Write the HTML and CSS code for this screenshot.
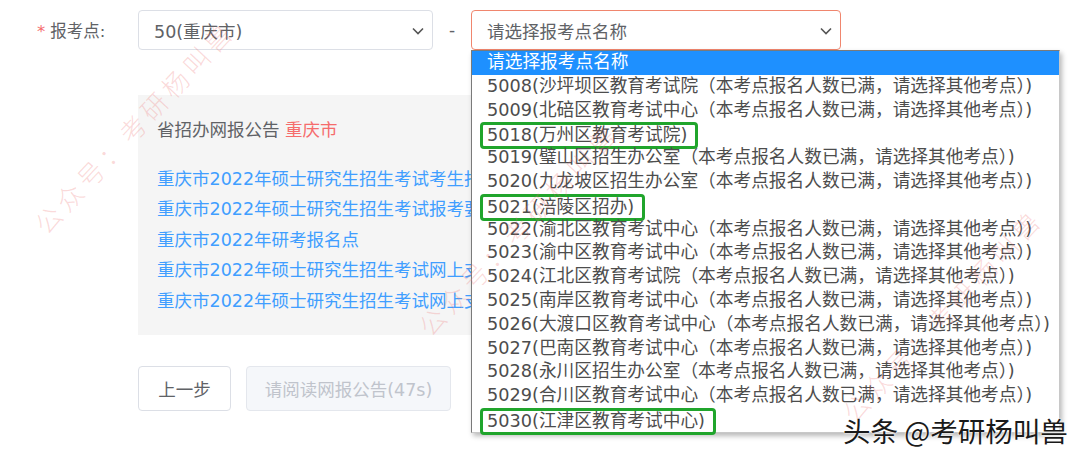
FILE: index.html
```html
<!DOCTYPE html>
<html lang="zh-CN">
<head>
    <meta charset="UTF-8">
    <meta name="viewport" content="width=device-width, initial-scale=1.0">
    <title>报考点选择</title>
    <link rel="stylesheet" href="styles.css">
</head>
<body>
    <div class="page">
        <div class="form-row">
            <label class="form-label"><span class="req">*</span>报考点:</label>
            <div class="select select-province">
                <span>50(重庆市)</span>
                <svg class="chevron" width="12" height="8" viewBox="0 0 12 8"><polyline points="1,1.5 6,6.5 11,1.5" fill="none" stroke="#555" stroke-width="1.6"/></svg>
            </div>
            <span class="dash">-</span>
            <div class="select select-site">
                <span>请选择报考点名称</span>
                <svg class="chevron" width="12" height="8" viewBox="0 0 12 8"><polyline points="1,1.5 6,6.5 11,1.5" fill="none" stroke="#555" stroke-width="1.6"/></svg>

                <!-- opened native dropdown -->
                <ul class="option-list">
                    <li class="selected">请选择报考点名称</li>
                    <li>5008(沙坪坝区教育考试院（本考点报名人数已满，请选择其他考点）)</li>
                    <li>5009(北碚区教育考试中心（本考点报名人数已满，请选择其他考点）)</li>
                    <li><span class="mark">5018(万州区教育考试院)</span></li>
                    <li>5019(璧山区招生办公室（本考点报名人数已满，请选择其他考点）)</li>
                    <li>5020(九龙坡区招生办公室（本考点报名人数已满，请选择其他考点）)</li>
                    <li><span class="mark">5021(涪陵区招办)</span></li>
                    <li>5022(渝北区教育考试中心（本考点报名人数已满，请选择其他考点）)</li>
                    <li>5023(渝中区教育考试中心（本考点报名人数已满，请选择其他考点）)</li>
                    <li>5024(江北区教育考试院（本考点报名人数已满，请选择其他考点）)</li>
                    <li>5025(南岸区教育考试中心（本考点报名人数已满，请选择其他考点）)</li>
                    <li>5026(大渡口区教育考试中心（本考点报名人数已满，请选择其他考点）)</li>
                    <li>5027(巴南区教育考试中心（本考点报名人数已满，请选择其他考点）)</li>
                    <li>5028(永川区招生办公室（本考点报名人数已满，请选择其他考点）)</li>
                    <li>5029(合川区教育考试中心（本考点报名人数已满，请选择其他考点）)</li>
                    <li><span class="mark">5030(江津区教育考试中心)</span></li>
                </ul>
            </div>
        </div>

        <div class="notice">
            <p class="notice-title">省招办网报公告 <span class="city">重庆市</span></p>
            <a href="#">重庆市2022年硕士研究生招生考试考生报名须知</a>
            <a href="#">重庆市2022年硕士研究生招生考试报考要求</a>
            <a href="#">重庆市2022年研考报名点</a>
            <a href="#">重庆市2022年硕士研究生招生考试网上支付说明</a>
            <a href="#">重庆市2022年硕士研究生招生考试网上支付须知</a>
        </div>

        <div class="actions">
            <button class="btn">上一步</button>
            <button class="btn btn-disabled" disabled>请阅读网报公告(47s)</button>
        </div>
    </div>

    <div class="watermark wm-1">公众号：考研杨叫兽</div>
    <div class="watermark wm-2">公众号：考研杨叫兽</div>
    <div class="watermark wm-3">公众号：考研杨叫兽</div>

    <div class="brand">头条 @考研杨叫兽</div>
</body>
</html>
```

FILE: styles.css
```css
body {
    margin: 0;
    width: 1080px;
    height: 458px;
    overflow: hidden;
    position: relative;
    background-color: #fff;
    font-family: "DejaVu Sans", "Noto Sans CJK SC", sans-serif;
    color: #606266;
}

.page {
    padding-top: 10px;
}

.form-row {
    display: flex;
    align-items: center;
    height: 40px;
}

.form-label {
    width: 138px;
    flex-shrink: 0;
    box-sizing: border-box;
    padding-left: 37px;
    font-size: 16.5px;
    color: #606266;
    white-space: nowrap;
}

.req {
    color: #f56c6c;
    margin-right: 5px;
}

.select {
    position: relative;
    flex-shrink: 0;
    height: 40px;
    box-sizing: border-box;
    border: 1px solid #dcdfe6;
    border-radius: 4px;
    display: flex;
    align-items: center;
    justify-content: space-between;
    padding: 0 8px 0 15px;
    font-size: 17.5px;
    color: #606266;
    background-color: #fff;
}

.select-province {
    width: 295px;
}

.select-site {
    width: 370px;
    border-color: #f0866e;
}

.chevron {
    display: block;
    margin-top: 2px;
}

.dash {
    width: 38px;
    text-align: center;
    font-size: 17px;
    color: #606266;
}

.option-list {
    position: absolute;
    top: 39px;
    left: -1px;
    width: 587px;
    margin: 0;
    padding: 0;
    list-style: none;
    background-color: #fff;
    border: 1px solid #7a7a7a;
    border-right-color: #c8c8c8;
    border-bottom-color: #c8c8c8;
    box-shadow: 2px 3px 5px rgba(0, 0, 0, 0.28);
    z-index: 5;
}

.option-list li {
    height: 23.8px;
    line-height: 23.8px;
    padding-left: 15px;
    font-size: 17.7px;
    color: #4d4d4d;
    white-space: nowrap;
}

.option-list li.selected {
    background-color: #1e90ff;
    color: #fff;
}

.mark {
    display: inline-block;
    line-height: 21px;
    border: 3px solid #20a52c;
    border-radius: 4px;
    padding: 0 8px 0 4px;
    margin-left: -7px;
}

.notice {
    margin: 45px 0 0 138px;
    width: 880px;
    height: 240px;
    box-sizing: border-box;
    padding: 21px 19px;
    background-color: #f5f5f5;
}

.notice-title {
    margin: 0 0 20px;
    font-size: 17.5px;
    line-height: 28px;
    color: #606266;
}

.city {
    color: #f56c6c;
}

.notice a {
    display: block;
    font-size: 17.5px;
    line-height: 30.4px;
    color: #409eff;
    text-decoration: none;
    white-space: nowrap;
}

.actions {
    display: flex;
    gap: 15px;
    margin: 31px 0 0 138px;
}

.btn {
    height: 45px;
    width: 93px;
    box-sizing: border-box;
    border: 1px solid #dcdfe6;
    border-radius: 4px;
    background-color: #fff;
    color: #606266;
    font-family: inherit;
    font-size: 17.5px;
    white-space: nowrap;
    padding: 0;
}

.btn-disabled {
    width: 205px;
    background-color: #f5f7fa;
    border-color: #e4e7ed;
    color: #c0c4cc;
}

.watermark {
    position: absolute;
    transform-origin: left bottom;
    transform: rotate(-47deg);
    font-family: "Noto Sans CJK SC", sans-serif;
    font-weight: 300;
    font-size: 26px;
    letter-spacing: 5px;
    color: rgba(238, 110, 110, 0.26);
    white-space: nowrap;
    pointer-events: none;
    z-index: 10;
}

.wm-1 {
    left: 52px;
    top: 204px;
}

.wm-2 {
    left: 436px;
    top: 306px;
}

.wm-3 {
    left: 860px;
    top: 392px;
}

.brand {
    position: absolute;
    left: 843px;
    top: 412px;
    font-family: "Noto Sans CJK SC", sans-serif;
    font-size: 27.5px;
    line-height: 36px;
    color: #1a1a1a;
    text-shadow: 0 0 2px #fff, 0 0 2px #fff;
    z-index: 12;
}
```
